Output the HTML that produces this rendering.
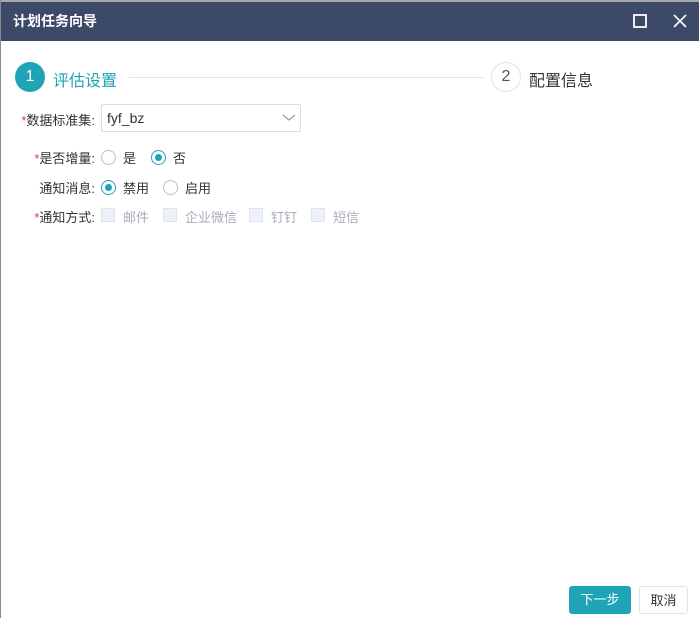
<!DOCTYPE html>
<html><head><meta charset="utf-8"><style>
*{margin:0;padding:0;box-sizing:border-box}
body{width:699px;height:618px;background:#fff;font-family:"Liberation Sans","Noto Sans CJK SC",sans-serif;position:relative;overflow:hidden;font-size:13px;color:#333}
.top{position:absolute;left:0;top:0;width:699px;height:2px;background:#a8a8a8}
.lb{position:absolute;left:0;top:0;width:1px;height:618px;background:#8a8a8a}
.hdr{position:absolute;left:1px;top:2px;width:698px;height:39px;background:#3c4a67;color:#fff;font-size:14px;line-height:39px;padding-left:12px;font-weight:bold}
.abs{position:absolute}
.c1,.c2{display:flex;align-items:center;justify-content:center;font-size:16px;border-radius:50%;width:30px;height:30px;top:62px}
.c1{left:15px;background:#1fa4b7;color:#fff}
.c2{left:491px;border:1px solid #dde3ea;color:#555}
.lbl{font-size:14px;text-align:right;width:95px;left:0}
.star{color:#e33}
.radio{width:15px;height:15px;border-radius:50%;border:1px solid #b8bec8;position:absolute}
.radio.on{border-color:#1fa4b7}
.radio.on::after{content:"";position:absolute;left:3px;top:3px;width:7px;height:7px;border-radius:50%;background:#1fa4b7}
.cb{width:14px;height:14px;background:#edf1f8;border:1px solid #dde3ee;position:absolute}
.btn{position:absolute;height:28px;border-radius:3px;text-align:center;line-height:28px;font-size:13px}
</style></head><body>
<div class="top"></div>
<div class="hdr">计划任务向导</div>
<div class="lb"></div>
<svg class="abs" style="left:633px;top:14px" width="15" height="15"><rect x="1" y="1" width="12" height="12" fill="none" stroke="#fff" stroke-width="1.8"/></svg>
<svg class="abs" style="left:673px;top:14px" width="15" height="15"><path d="M1 1L13 13M13 1L1 13" stroke="#fff" stroke-width="1.6"/></svg>
<div class="abs c1"><span>1</span></div>
<div class="abs" style="left:53px;top:67px;font-size:16px;color:#1fa4b7">评估设置</div>
<div class="abs" style="left:129px;top:77px;width:355px;height:1px;background:#dfe4ec"></div>
<div class="abs c2"><span>2</span></div>
<div class="abs" style="left:529px;top:67px;font-size:16px;color:#333">配置信息</div>
<div class="abs lbl" style="top:110px;font-size:13px"><span class="star">*</span>数据标准集:</div>
<div class="abs" style="left:101px;top:104px;width:200px;height:28px;border:1px solid #d8dde6;border-radius:2px;padding-left:5px;line-height:26px;font-size:14px">fyf_bz</div>
<svg class="abs" style="left:282px;top:113px" width="14" height="9"><path d="M1 2L7 7L13 2" fill="none" stroke="#999" stroke-width="1.2"/></svg>
<div class="abs lbl" style="top:148px;font-size:13px"><span class="star">*</span>是否增量:</div>
<div class="radio" style="left:101px;top:150px"></div><div class="abs" style="left:123px;top:148px">是</div>
<div class="radio on" style="left:151px;top:150px"></div><div class="abs" style="left:173px;top:148px">否</div>
<div class="abs lbl" style="top:178px;font-size:13px">通知消息:</div>
<div class="radio on" style="left:101px;top:180px"></div><div class="abs" style="left:123px;top:178px">禁用</div>
<div class="radio" style="left:163px;top:180px"></div><div class="abs" style="left:185px;top:178px">启用</div>
<div class="abs lbl" style="top:207px;font-size:13px"><span class="star">*</span>通知方式:</div>
<div class="cb" style="left:101px;top:208px"></div><div class="abs" style="left:123px;top:207px;color:#aab">邮件</div>
<div class="cb" style="left:163px;top:208px"></div><div class="abs" style="left:185px;top:207px;color:#aab">企业微信</div>
<div class="cb" style="left:249px;top:208px"></div><div class="abs" style="left:271px;top:207px;color:#aab">钉钉</div>
<div class="cb" style="left:311px;top:208px"></div><div class="abs" style="left:333px;top:207px;color:#aab">短信</div>
<div class="btn" style="left:569px;top:586px;width:62px;background:#1fa4b7;color:#fff">下一步</div>
<div class="btn" style="left:639px;top:586px;width:49px;border:1px solid #dfe3ea;color:#333">取消</div>
</body></html>
